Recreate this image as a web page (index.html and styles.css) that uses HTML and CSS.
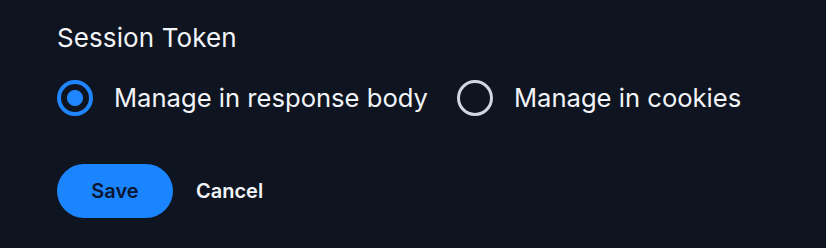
FILE: index.html
```html
<!DOCTYPE html>
<html>
    <head>
        <title>Session Token</title>
        <meta charset="UTF-8">
        <link rel="stylesheet" href="styles.css">
    </head>
    <body>
        <form class="settings" action="#">
            <fieldset class="field">
                <legend class="field-label">Session Token</legend>
                <div class="options">
                    <label class="option">
                        <input type="radio" name="token" value="body" checked>
                        <span class="radio"></span>
                        Manage in response body
                    </label>
                    <label class="option">
                        <input type="radio" name="token" value="cookies">
                        <span class="radio"></span>
                        Manage in cookies
                    </label>
                </div>
            </fieldset>
            <div class="actions">
                <button type="submit" class="btn btn-primary">Save</button>
                <button type="button" class="btn btn-link">Cancel</button>
            </div>
        </form>
    </body>
</html>
```

FILE: styles.css
```css
body {
    margin: 0;
    background-color: #0f1520;
    color: #f2f4f8;
    font-family: Inter, Roboto, sans-serif;
}
.settings {
    padding: 22px 57px;
}
.field {
    margin: 0;
    padding: 0;
    border: 0;
}
.field-label {
    padding: 0;
    font-size: 26px;
    line-height: 32px;
    letter-spacing: 0.1px;
}
.options {
    display: flex;
    gap: 29px;
    margin-top: 26px;
}
.option {
    display: flex;
    align-items: center;
    gap: 21px;
    font-size: 25.6px;
    line-height: 36px;
    cursor: pointer;
}
.option input {
    display: none;
}
.radio {
    width: 36px;
    height: 36px;
    box-sizing: border-box;
    border: 3px solid #d3d6de;
    border-radius: 50%;
}
.option input:checked + .radio {
    border: 4px solid #1f86ff;
    background: radial-gradient(circle, #1f86ff 0 7.5px, transparent 8.5px);
}
.actions {
    display: flex;
    align-items: center;
    gap: 23px;
    margin-top: 48px;
}
.btn {
    font-family: Inter, Roboto, sans-serif;
    font-size: 20px;
    font-weight: 600;
    border: 0;
    cursor: pointer;
}
.btn-primary {
    width: 116px;
    height: 54px;
    border-radius: 27px;
    background-color: #1a85ff;
    color: #0b1630;
}
.btn-link {
    padding: 0;
    background: none;
    color: #f2f4f8;
}
```
